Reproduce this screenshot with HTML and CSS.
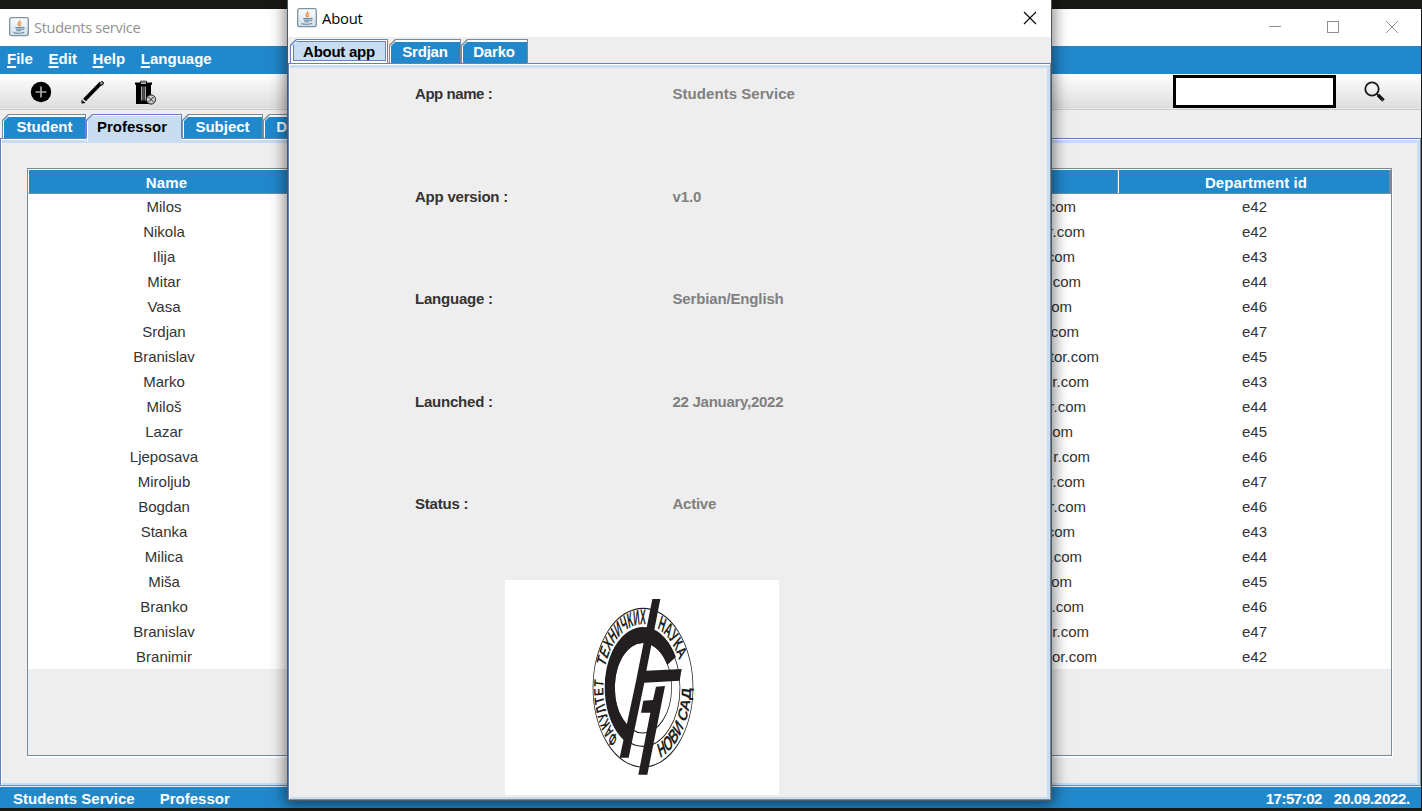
FILE: index.html
```
<!DOCTYPE html>
<html lang="en">
<head>
<meta charset="utf-8">
<title>Students service</title>
<link rel="stylesheet" href="styles.css">
</head>
<body>
<svg width="0" height="0" class="defs">
  <defs>
    <linearGradient id="jg" x1="0" y1="0" x2="0" y2="1"><stop offset="0" stop-color="#fff"/><stop offset="1" stop-color="#cfdde8"/></linearGradient>
    <symbol id="java" viewBox="0 0 20 20">
      <rect x=".7" y=".7" width="18.600" height="18" rx="1.600" fill="url(#jg)" stroke="#7d93a3" stroke-width="1.300"/>
      <path d="M10.600 3c1 2-2.600 2.700-1.500 4.500.3.600 1 .9.600 1.700M12.600 5.200c-1.800.8-2.300 1.600-1.600 2.500.4.600.1 1.100-.4 1.500" fill="none" stroke="#ef8b3f" stroke-width="1.200"/>
      <path d="M6.200 10.600h7.300M7 12.200h5.800M7.500 13.800h4.600M4.600 15.500c2 1.100 8.600 1.100 10.500-.2M13.500 10.300c2.300-.3 2.100 2-.5 2.600" fill="none" stroke="#6b8ba5" stroke-width="1.100"/>
    </symbol>
  </defs>
</svg>

<div class="window">
  <header class="titlebar">
    <svg class="java"><use href="#java"/></svg>
    <span class="title">Students service</span>
    <svg class="controls" width="132" height="14" viewBox="0 0 132 14" fill="none" stroke="#8f8f8f">
      <path d="M1 6.500h12"/><rect x="59.500" y="1.500" width="11" height="11"/><path d="M118 1l12 12M130 1l-12 12"/>
    </svg>
  </header>
  <nav class="menubar"><span><u>F</u>ile</span><span><u>E</u>dit</span><span><u>H</u>elp</span><span><u>L</u>anguage</span></nav>
  <div class="toolbar">
    <svg class="tools" width="130" height="26" viewBox="0 0 130 26">
      <circle cx="11" cy="13" r="10.200"/><path d="M11 7.500v11M5.500 13h11" stroke="#aaa" stroke-width="1.700"/>
      <path d="M54.500 21L71 4" stroke="#000" stroke-width="3.800"/>
      <path d="M51.500 20.500l4 3.500-4 .5z"/><path d="M70 4.500l2-2.500 2 2-2 2.500z" fill="#666" stroke="#111" stroke-width=".8"/><path d="M71.800 3.200l-1.600 2M52.800 22.500l1.500-1.500" stroke="#ccc" stroke-width=".9"/>
      <path d="M105 3.500h17v2.200h-17zM106 5h15v20h-15z"/><path d="M110.500 4V2.200h6V4" fill="none" stroke="#333"/><path d="M111 1.500h5M111 4.500h5" stroke="#bbb"/>
      <path d="M111.500 7.500v14M115.500 7.500v14" stroke="#aaa"/><path d="M113.500 7.500v14" stroke="#555" stroke-width="2.500"/>
      <circle cx="121" cy="20.500" r="4.600" fill="#ccc" stroke="#222"/><path d="M118.500 18l5 5M123.500 18l-5 5" stroke="#333"/>
    </svg>
    <div class="search"></div>
    <svg class="lens" width="24" height="24" viewBox="0 0 24 24" fill="none">
      <circle cx="9" cy="8" r="6.700" stroke="#1a1a1a" stroke-width="1.800"/><path d="M13.500 12.500l2 2" stroke="#222" stroke-width="1.800"/><path d="M15 14l5.500 5.500" stroke="#111" stroke-width="3.400"/><path d="M18.800 18.500l1.500 1.300" stroke="#888"/>
    </svg>
  </div>
  <div class="tabs">
    <div class="tab t1"><span>Student</span></div><div class="tab t2 on"><span>Professor</span></div><div class="tab t3"><span>Subject</span></div><div class="tab t4"><span>Department</span></div>
  </div>
  <main class="pane">
    <section class="grid">
      <div class="row head"><b>Name</b><i></i><i></i><b>Department id</b></div>
      <div class="row"><span>Milos</span><i></i><em style="width:230px">.com</em><span>e42</span></div>
      <div class="row"><span>Nikola</span><i></i><em style="width:239px">r.com</em><span>e42</span></div>
      <div class="row"><span>Ilija</span><i></i><em style="width:229px">.com</em><span>e43</span></div>
      <div class="row"><span>Mitar</span><i></i><em style="width:235px">.com</em><span>e44</span></div>
      <div class="row"><span>Vasa</span><i></i><em style="width:226px">.com</em><span>e46</span></div>
      <div class="row"><span>Srdjan</span><i></i><em style="width:233px">.com</em><span>e47</span></div>
      <div class="row"><span>Branislav</span><i></i><em style="width:253px">tor.com</em><span>e45</span></div>
      <div class="row"><span>Marko</span><i></i><em style="width:243px">r.com</em><span>e43</span></div>
      <div class="row"><span>Miloš</span><i></i><em style="width:240px">r.com</em><span>e44</span></div>
      <div class="row"><span>Lazar</span><i></i><em style="width:227px">.com</em><span>e45</span></div>
      <div class="row"><span>Ljeposava</span><i></i><em style="width:244px">r.com</em><span>e46</span></div>
      <div class="row"><span>Miroljub</span><i></i><em style="width:239px">r.com</em><span>e47</span></div>
      <div class="row"><span>Bogdan</span><i></i><em style="width:240px">r.com</em><span>e46</span></div>
      <div class="row"><span>Stanka</span><i></i><em style="width:229px">.com</em><span>e43</span></div>
      <div class="row"><span>Milica</span><i></i><em style="width:236px">.com</em><span>e44</span></div>
      <div class="row"><span>Miša</span><i></i><em style="width:226px">.com</em><span>e45</span></div>
      <div class="row"><span>Branko</span><i></i><em style="width:238px">.com</em><span>e46</span></div>
      <div class="row"><span>Branislav</span><i></i><em style="width:243px">r.com</em><span>e47</span></div>
      <div class="row"><span>Branimir</span><i></i><em style="width:251px">or.com</em><span>e42</span></div>
    </section>
  </main>
  <footer class="status"><span>Students Service</span><span class="section">Professor</span><span class="time">17:57:02</span><span class="date">20.09.2022.</span></footer>
</div>

<div class="dialog">
  <header class="dtitle">
    <svg class="java"><use href="#java"/></svg><span>About</span>
    <svg class="close" width="14" height="14" viewBox="0 0 14 14"><path d="M1 1l12 12M13 1L1 13" stroke="#000" stroke-width="1.100"/></svg>
  </header>
  <div class="tabs dtabs">
    <div class="tab d1 on"><span>About app</span></div><div class="tab d2"><span>Srdjan</span></div><div class="tab d3"><span>Darko</span></div>
  </div>
  <div class="pane about">
    <dl>
      <dt class="first">App name :</dt><dd class="first">Students Service</dd>
      <dt>App version :</dt><dd>v1.0</dd>
      <dt>Language :</dt><dd>Serbian/English</dd>
      <dt>Launched :</dt><dd class="launched">22 January,2022</dd>
      <dt>Status :</dt><dd class="active">Active</dd>
    </dl>
    <div class="logo">
      <svg width="140" height="215" viewBox="0 0 420 645">
        <defs>
          <path id="p1" d="M-117 149A189 189 0 0 1 -189 -8A189 189 0 0 1 -178 -63"/>
          <path id="p2" d="M-181 -60A190 190 0 0 1 8 -190L40 -186"/>
          <path id="p3" d="M68 -178A190 190 0 0 1 190 0"/>
          <path id="p4" d="M82 211A226 226 0 0 0 226 -30"/>
        </defs>
        <g transform="translate(219 323) scale(.63 1)" fill="none" stroke="#231f20">
          <circle r="238" stroke-width="3.500"/>
          <circle r="176" stroke-width="3.500"/><circle r="136" stroke-width="3.500"/>
          <path d="M136 -80A158 158 0 1 0 -65 144" stroke-width="48"/>
          <g class="ring" fill="#231f20" stroke="none">
            <text><textPath href="#p1" textLength="194" lengthAdjust="spacingAndGlyphs">ФАКУЛТЕТ</textPath></text>
            <text><textPath href="#p2" textLength="252" lengthAdjust="spacingAndGlyphs">ТЕХНИЧКИХ</textPath></text>
            <text><textPath href="#p3" textLength="146" lengthAdjust="spacingAndGlyphs">НАУКА</textPath></text>
            <text><textPath href="#p4" textLength="272" lengthAdjust="spacingAndGlyphs">НОВИ САД</textPath></text>
          </g>
        </g>
        <g fill="#231f20">
          <path d="M247 57H271L229 272L335 267L329 302L223 308L176 533H149L197 308Z"/>
          <path d="M258 320L285 318L232 584H205L241 398H213L220 362L249 360Z"/>
        </g>
      </svg>
    </div>
  </div>
</div>
</body>
</html>
```
FILE: styles.css
```
* { box-sizing: border-box; }
html, body { margin: 0; height: 811px; overflow: hidden; }
body { background: #181814; padding-top: 9px; position: relative; font: 15px/18px "Liberation Sans", Arial, sans-serif; color: #333; }
.defs { position: absolute; }
.window { width: 1421px; height: 799px; background: #eee; display: flex; flex-direction: column; overflow: hidden; }
.titlebar { height: 37px; flex: none; background: #fff; display: flex; align-items: center; padding: 0 21px 2px 9px; color: #929292; font: 14.600px "Open Sans", "Noto Sans", sans-serif; }
.java { width: 20px; height: 20px; flex: none; margin-right: 5px; }
.title { letter-spacing: -.32px; }
.controls { margin-left: auto; }
.menubar { height: 28px; flex: none; background: #2188cc; color: #fff; font-weight: bold; display: flex; gap: 15.700px; padding: 4px 7px; }
.menubar u { text-decoration-thickness: 2px; text-underline-offset: 2px; text-decoration-skip-ink: none; }
.toolbar { height: 37px; flex: none; display: flex; background: linear-gradient(#fff, #ddd 34px, #eee 35px, #ccc 35px, #ccc 36px, #eee 36px); padding-right: 34px; }
.tools { margin: 5px 0 0 30px; }
.search { margin: 1px 29px 0 auto; width: 163px; height: 33px; border: 3px solid #000; background: #fff; }
.lens { margin-top: 7px; width: 24px; margin-left: -2px; }
.tabs { height: 27px; flex: none; display: flex; padding: 3px 0 0 2px; font-weight: bold; }
.tab { position: relative; height: 24px; flex: none; background: #7a8a99; color: #fff; text-align: center; clip-path: polygon(0 6px, 6px 0, 100% 0, 100% 100%, 0 100%); }
.tab::before, .tab::after { content: ""; position: absolute; inset: 1px 1px 0 1px; background: #fff; clip-path: polygon(0 6px, 6px 0, 100% 0, 100% 100%, 0 100%); }
.tab::after { inset: 3px 1px 0 2px; background: #2188cc; clip-path: polygon(0 4px, 4px 0, 100% 0, 100% 100%, 0 100%); }
.tab span { position: relative; z-index: 1; line-height: 26px; white-space: nowrap; }
.tab.on { background: linear-gradient(#6382bf 24px, #c8ddf2 24px); color: #000; height: 28px; }
.tab.on::after { inset: 2px 1px 0 2px; background: #c8ddf2; }
.t1 { width: 84px; padding-left: 1px; }
.t2 { width: 96px; padding-right: 4px; }
.t3 { width: 81px; }
.t4 { width: 110px; }
.pane { flex: 1; min-height: 0; border: 1px solid #6382bf; border-right-color: #7a8a99; border-bottom-color: #7a8a99; box-shadow: inset 1px 1px #fff, inset -3px -2px #c8ddf2, inset 0 4px #c8ddf2; }
.tabs + main { padding: 29px 28px 0 26px; }
.grid { height: 588px; border: 1px solid #7a8a99; box-shadow: 1px 2px #fff; }
.row { height: 25px; display: grid; grid-template-columns: 272px 1fr 272px 273px; background: #fff; text-align: center; line-height: 26px; }
.row em { font-style: normal; text-align: right; }
.head { background: #2188cc; color: #fff; border: 1px solid #fff; border-width: 1px 0 0 1px; border-bottom: 1px solid #7a8a99; box-shadow: inset -2px 0 #7a8a99; grid-template-rows: 23px; letter-spacing: .1px; }
.head b:last-child { border-left: 1px solid #fff; box-shadow: -1px 0 #7a8a99; padding-left: 2px; }
.head b:first-child { padding-left: 3px; }
.status { height: 21px; margin-top: 1px; flex: none; background: #2188cc; color: #fff; font-weight: bold; display: flex; padding: 3px 11px 0 13px; }
.section { margin-left: 25px; }
.time { margin: 0 12px 0 auto; letter-spacing: -.5px; }
.date { letter-spacing: -.28px; }
.dialog { position: absolute; left: 288px; top: 0; width: 763px; height: 800px; background: #eee; display: flex; flex-direction: column; box-shadow: 0 0 0 1px #4d5962, 0 2px 14px 3px rgba(0,0,0,.5); }
.dtitle { height: 37px; flex: none; background: #fff; display: flex; align-items: center; padding: 0 14px 1px 9px; color: #000; font: 14.800px "Open Sans", "Noto Sans", sans-serif; letter-spacing: -.2px; }
.close { margin-left: auto; }
.dtabs { height: 26px; padding-top: 2px; }
.d1 { width: 98px; letter-spacing: -.25px; }
.d2 { width: 72px; margin-left: 1px; letter-spacing: -.2px; }
.d3 { width: 67px; letter-spacing: -.2px; padding-right: 1px; }
.tab.d1.on { height: 24px; }
.tab.d1::after { border: 1px solid #6382bf; bottom: 2px; right: 2px; left: 3px; }
.about { padding: 21px 0 0 126px; display: flex; flex-direction: column; }
.about dl { margin: 0; display: grid; grid-template-columns: 257.500px 1fr; grid-auto-rows: 102.500px; font-weight: bold; height: 495px; }
.about dt { letter-spacing: -.22px; }
.about dt.first { letter-spacing: -.45px; }
.about dd { margin: 0; color: #808080; letter-spacing: -.15px; }
.about dd.first { letter-spacing: .05px; }
.about dd.launched { letter-spacing: -.27px; }
.about dd.active { letter-spacing: -.25px; }
.logo { width: 274px; height: 215px; background: #fff; margin-left: 90px; padding-left: 65px; flex: none; }
.ring { font: bold 64px "Liberation Sans", Arial, sans-serif; }
```
